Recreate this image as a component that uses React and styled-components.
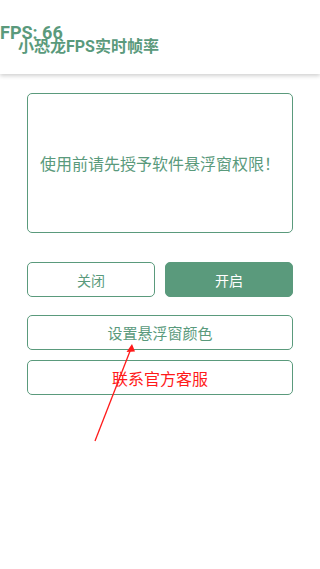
import React from 'react';
import styled, { createGlobalStyle } from 'styled-components';

const GREEN = '#5a9a7c';

const GlobalStyle = createGlobalStyle`
  html, body {
    margin: 0;
    padding: 0;
    background: #ffffff;
    font-family: Roboto, "Noto Sans CJK SC", sans-serif;
  }
`;

const Page = styled.div`
  position: relative;
  width: 320px;
  height: 569px;
  overflow: hidden;
  background: #ffffff;
`;

const Header = styled.div`
  height: 74px;
  box-sizing: border-box;
  padding: 37px 0 0 18px;
  box-shadow: 0 2px 4px rgba(0, 0, 0, 0.18);
`;

const Title = styled.div`
  color: ${GREEN};
  font-size: 16px;
  font-weight: bold;
  line-height: 19px;
`;

const FpsBadge = styled.div`
  position: absolute;
  left: 0;
  top: 23px;
  color: ${GREEN};
  font-size: 18px;
  font-weight: bold;
  line-height: 20px;
`;

const Content = styled.div`
  display: flex;
  flex-direction: column;
  padding: 19px 27px 0;
`;

const Notice = styled.div`
  height: 140px;
  box-sizing: border-box;
  border: 1.5px solid ${GREEN};
  border-radius: 5px;
  display: flex;
  align-items: center;
  justify-content: center;
  color: ${GREEN};
  font-size: 16px;
  font-family: "Noto Sans CJK SC", sans-serif;
`;

const ButtonRow = styled.div`
  display: flex;
  gap: 10px;
  margin-top: 29px;
`;

const Button = styled.div`
  flex: ${p => (p.$half ? '1 1 0' : '0 0 auto')};
  height: 35px;
  box-sizing: border-box;
  border: 1.5px solid ${GREEN};
  border-radius: 5px;
  display: flex;
  align-items: center;
  justify-content: center;
  font-size: ${p => (p.$red ? '16px' : p.$half ? '14px' : '15px')};
  color: ${p => (p.$red ? '#ff1a1a' : p.$filled ? '#ffffff' : GREEN)};
  background: ${p => (p.$filled ? GREEN : '#ffffff')};
  margin-top: ${p => p.$gap || 0}px;
`;

const Arrow = styled.svg`
  position: absolute;
  left: 0;
  top: 0;
  pointer-events: none;
`;

export default function App() {
  return (
    <>
      <GlobalStyle />
      <Page>
        <Header>
          <Title>小恐龙FPS实时帧率</Title>
        </Header>
        <FpsBadge>FPS: 66</FpsBadge>
        <Content>
          <Notice>使用前请先授予软件悬浮窗权限！</Notice>
          <ButtonRow>
            <Button $half>关闭</Button>
            <Button $half $filled>开启</Button>
          </ButtonRow>
          <Button $gap={18}>设置悬浮窗颜色</Button>
          <Button $gap={10} $red>联系官方客服</Button>
        </Content>
        <Arrow width="320" height="569" viewBox="0 0 320 569">
          <line x1="95" y1="441" x2="132" y2="346" stroke="#ff1a1a" strokeWidth="1.3" />
          <path d="M132 344 L126.5 352 L135 351.5 Z" fill="#ff1a1a" />
        </Arrow>
      </Page>
    </>
  );
}
